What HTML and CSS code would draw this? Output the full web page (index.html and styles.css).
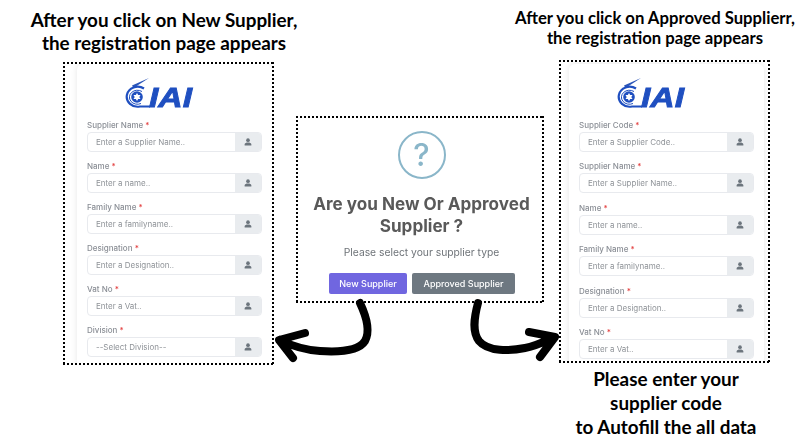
FILE: index.html
```html
<!DOCTYPE html>
<html lang="en">
<head>
    <meta charset="UTF-8">
    <meta name="viewport" content="width=device-width, initial-scale=1.0">
    <title>Supplier Registration Steps</title>
    <link rel="stylesheet" href="styles.css">
</head>
<body>
    <svg width="0" height="0" class="defs">
        <symbol id="person" viewBox="0 0 10 10">
            <circle cx="5" cy="2.7" r="2.3"/>
            <path d="M0.8 9.4V8c0-1.5 2-2.3 4.2-2.3S9.2 6.500 9.2 8v1.400z"/>
        </symbol>
        <symbol id="emblem" viewBox="0 0 68 30">
            <path d="M24 0L7 7.500l1.500 2.500z" fill="#2b55b8"/>
            <path d="M19 10.500A11 10 0 1 0 15 28.500H25" class="logo-ring" stroke-width="2.200"/>
            <path d="M17 13.500A8 7 0 1 0 16 25.500" class="logo-ring" stroke-width="1"/>
            <circle cx="12" cy="19" r="5.800" fill="#1f4fc0"/>
            <path d="M12 15l3.500 6H8.500zM12 23l-3.500-6h7z" fill="#fff"/>
        </symbol>
    </svg>

    <main class="canvas">
        <!-- Left side -->
        <h2 class="caption caption-left">After you click on New Supplier,<br>the registration page appears</h2>

        <section class="frame frame-left">
            <form class="card card-left">
                <svg class="logo" viewBox="0 0 72 36"><use href="#emblem" width="68" height="30"/><text x="24" y="29" textLength="43" lengthAdjust="spacingAndGlyphs" class="logo-text">IAI</text></svg>
                <div class="fields">
                    <div class="field">
                        <div class="field-label">Supplier Name <span class="req">*</span></div>
                        <div class="field-input"><span class="placeholder">Enter a Supplier Name..</span><span class="addon"><svg><use href="#person"/></svg></span></div>
                    </div>
                    <div class="field">
                        <div class="field-label">Name <span class="req">*</span></div>
                        <div class="field-input"><span class="placeholder">Enter a name..</span><span class="addon"><svg><use href="#person"/></svg></span></div>
                    </div>
                    <div class="field">
                        <div class="field-label">Family Name <span class="req">*</span></div>
                        <div class="field-input"><span class="placeholder">Enter a familyname..</span><span class="addon"><svg><use href="#person"/></svg></span></div>
                    </div>
                    <div class="field">
                        <div class="field-label">Designation <span class="req">*</span></div>
                        <div class="field-input"><span class="placeholder">Enter a Designation..</span><span class="addon"><svg><use href="#person"/></svg></span></div>
                    </div>
                    <div class="field">
                        <div class="field-label">Vat No <span class="req">*</span></div>
                        <div class="field-input"><span class="placeholder">Enter a Vat..</span><span class="addon"><svg><use href="#person"/></svg></span></div>
                    </div>
                    <div class="field">
                        <div class="field-label">Division <span class="req">*</span></div>
                        <div class="field-input"><span class="placeholder">--Select Division--</span><span class="addon"><svg><use href="#person"/></svg></span></div>
                    </div>
                </div>
            </form>
        </section>

        <!-- Middle dialog -->
        <section class="frame frame-dialog">
            <div class="question-icon">?</div>
            <h1 class="dialog-title">Are you New Or Approved Supplier ?</h1>
            <p class="dialog-text">Please select your supplier type</p>
            <div class="dialog-buttons">
                <button class="btn btn-new">New Supplier</button>
                <button class="btn btn-approved">Approved Supplier</button>
            </div>
        </section>

        <!-- Right side -->
        <h2 class="caption caption-right">After you click on Approved Supplierr,<br>the registration page appears</h2>

        <section class="frame frame-right">
            <form class="card card-right">
                <svg class="logo" viewBox="0 0 72 36"><use href="#emblem" width="68" height="30"/><text x="24" y="29" textLength="43" lengthAdjust="spacingAndGlyphs" class="logo-text">IAI</text></svg>
                <div class="fields">
                    <div class="field">
                        <div class="field-label">Supplier Code <span class="req">*</span></div>
                        <div class="field-input"><span class="placeholder">Enter a Supplier Code..</span><span class="addon"><svg><use href="#person"/></svg></span></div>
                    </div>
                    <div class="field">
                        <div class="field-label">Supplier Name <span class="req">*</span></div>
                        <div class="field-input"><span class="placeholder">Enter a Supplier Name..</span><span class="addon"><svg><use href="#person"/></svg></span></div>
                    </div>
                    <div class="field">
                        <div class="field-label">Name <span class="req">*</span></div>
                        <div class="field-input"><span class="placeholder">Enter a name..</span><span class="addon"><svg><use href="#person"/></svg></span></div>
                    </div>
                    <div class="field">
                        <div class="field-label">Family Name <span class="req">*</span></div>
                        <div class="field-input"><span class="placeholder">Enter a familyname..</span><span class="addon"><svg><use href="#person"/></svg></span></div>
                    </div>
                    <div class="field">
                        <div class="field-label">Designation <span class="req">*</span></div>
                        <div class="field-input"><span class="placeholder">Enter a Designation..</span><span class="addon"><svg><use href="#person"/></svg></span></div>
                    </div>
                    <div class="field">
                        <div class="field-label">Vat No <span class="req">*</span></div>
                        <div class="field-input"><span class="placeholder">Enter a Vat..</span><span class="addon"><svg><use href="#person"/></svg></span></div>
                    </div>
                </div>
            </form>
        </section>

        <h2 class="caption caption-bottom">Please enter your<br>supplier code<br>to Autofill the all data</h2>

        <!-- Arrows from the dialog to each form -->
        <svg class="arrows" width="799" height="447" viewBox="0 0 799 447">
            <path d="M360 303C368 320 370 332 365 341C358 352 335 352 320 351C305 350 292 346 280 340M305 333L279 340L293 358"/>
            <path d="M478 303C474 318 472 332 479 341C488 352 510 351 525 348C537 346 545 341 554 337M529 332L555 337L540 357"/>
        </svg>
    </main>
</body>
</html>
```

FILE: styles.css
```css
body {
    margin: 0;
    background: #fff;
    font-family: 'Inter', 'Liberation Sans', sans-serif;
    overflow: hidden;
}

.defs {
    position: absolute;
}

.canvas {
    position: relative;
    width: 799px;
    height: 447px;
    overflow: hidden;
}

/* Captions */
.caption {
    position: absolute;
    margin: 0;
    font-family: 'Lato', 'Liberation Sans', sans-serif;
    font-weight: 700;
    text-align: center;
    color: #000;
    white-space: nowrap;
}

.caption-left {
    left: 19px;
    width: 290px;
    top: 8px;
    font-size: 18.85px;
    line-height: 23px;
}

.caption-right {
    left: 512px;
    width: 286px;
    top: 8px;
    font-size: 16.7px;
    line-height: 20px;
}

.caption-bottom {
    left: 566px;
    width: 200px;
    top: 367px;
    font-size: 18.9px;
    line-height: 24px;
}

/* Dotted frames: square dots, drawn in the transparent border */
.frame {
    position: absolute;
    box-sizing: border-box;
    border: 2px solid transparent;
    background-color: #fff;
    background-image:
        linear-gradient(90deg, #000 60%, transparent 0),
        linear-gradient(90deg, #000 60%, transparent 0),
        linear-gradient(#000 60%, transparent 0),
        linear-gradient(#000 60%, transparent 0);
    background-position: 0 0, 0 100%, 0 0, 100% 0;
    background-size: 4px 2px, 4px 2px, 2px 4px, 2px 4px;
    background-repeat: repeat-x, repeat-x, repeat-y, repeat-y;
    background-origin: border-box;
    background-clip: border-box;
}

.frame-left {
    left: 63px;
    top: 62px;
    width: 211px;
    height: 303px;
    overflow: hidden;
}

.frame-right {
    left: 559px;
    top: 60px;
    width: 211px;
    height: 303px;
    overflow: hidden;
}

.frame-dialog {
    left: 296px;
    top: 116px;
    width: 248px;
    height: 187px;
    display: flex;
    flex-direction: column;
    align-items: center;
    padding: 13px 0 0 3px;
}

/* Form cards */
.card {
    box-sizing: border-box;
    height: 320px;
    padding: 14px 10px 0;
    border-radius: 6px;
    background: #fff;
    box-shadow: 0 0 6px rgba(0, 0, 0, 0.1);
    filter: blur(0.3px);
}

.card-left {
    margin: 0 0 0 12px;
}

.card-right {
    margin: 2px 4px 0 8px;
}

.logo {
    display: block;
    width: 72px;
    height: 36px;
    margin: 0 0 -6px 38px;
}

.logo-ring {
    fill: none;
    stroke: #1f4fc0;
}

.logo-text {
    font-family: 'Liberation Sans', sans-serif;
    font-size: 27px;
    font-weight: 700;
    font-style: italic;
    fill: #1f4fc0;
    stroke: #1f4fc0;
    stroke-width: 0.8;
}

.fields {
    display: flex;
    flex-direction: column;
    gap: 8px;
    margin-top: 11px;
}

.card-right .fields {
    gap: 8.4px;
}

.field-label {
    height: 12px;
    margin-bottom: 1px;
    font-size: 8px;
    font-weight: 500;
    line-height: 12px;
    color: #8b8f96;
}

.req {
    color: #e23b3b;
}

.field-input {
    display: flex;
    align-items: center;
    height: 20px;
    border: 1px solid #e8eaee;
    border-radius: 4px;
    box-sizing: border-box;
    overflow: hidden;
}

.placeholder {
    flex: 1;
    padding-left: 8px;
    font-size: 8px;
    color: #8f9398;
}

.addon {
    display: flex;
    align-items: center;
    justify-content: center;
    width: 26px;
    height: 100%;
    background: #e9ecef;
}

.addon svg {
    width: 8px;
    height: 8px;
    fill: #6c757d;
}

/* Dialog */
.question-icon {
    box-sizing: border-box;
    width: 48px;
    height: 48px;
    border: 2px solid #8ab6c9;
    border-radius: 50%;
    font-size: 31px;
    font-weight: 500;
    line-height: 44px;
    text-align: center;
    color: #8ab6c9;
    filter: blur(0.3px);
}

.dialog-title {
    width: 230px;
    margin: 14px 0 0;
    font-size: 17.1px;
    font-weight: 700;
    line-height: 22px;
    text-align: center;
    color: #595959;
    filter: blur(0.3px);
}

.dialog-text {
    margin: 8px 0 0;
    font-size: 10.3px;
    line-height: 14px;
    color: #6f7479;
    filter: blur(0.3px);
}

.dialog-buttons {
    display: flex;
    gap: 5px;
    margin: 14px 0 0 1px;
    filter: blur(0.3px);
}

.btn {
    height: 21px;
    padding: 0;
    border: none;
    border-radius: 2px;
    font-family: inherit;
    font-size: 9px;
    font-weight: 500;
    color: #fff;
}

.btn-new {
    width: 78px;
    background: #7066e0;
}

.btn-approved {
    width: 103px;
    background: #6e7881;
}

/* Arrows */
.arrows {
    position: absolute;
    left: 0;
    top: 0;
}

.arrows path {
    fill: none;
    stroke: #000;
    stroke-width: 8;
    stroke-linecap: round;
    stroke-linejoin: round;
}
```
